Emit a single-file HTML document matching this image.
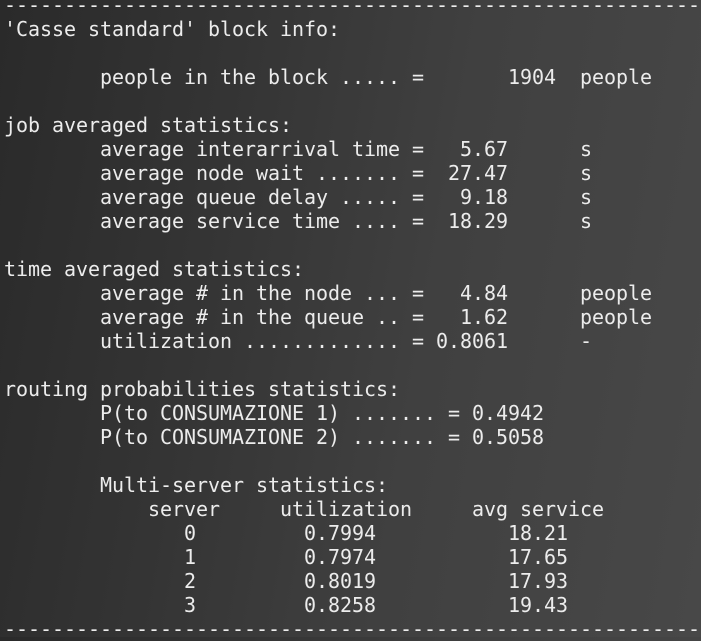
<!DOCTYPE html>
<html><head><meta charset="utf-8"><style>
html,body{margin:0;padding:0;width:701px;height:637px;overflow:hidden;}
body{background:linear-gradient(100deg,#2a2a2a 0%,#343434 30%,#404040 60%,#484848 100%);}
pre{position:absolute;left:4px;top:-7px;margin:0;font-family:"DejaVu Sans Mono","Liberation Mono",monospace;font-size:20px;line-height:24px;color:#ececec;letter-spacing:-0.04px;}
</style></head><body><pre>-----------------------------------------------------------
'Casse standard' block info:

        people in the block ..... =       1904  people

job averaged statistics:
        average interarrival time =   5.67      s
        average node wait ....... =  27.47      s
        average queue delay ..... =   9.18      s
        average service time .... =  18.29      s

time averaged statistics:
        average # in the node ... =   4.84      people
        average # in the queue .. =   1.62      people
        utilization ............. = 0.8061      -

routing probabilities statistics:
        P(to CONSUMAZIONE 1) ....... = 0.4942
        P(to CONSUMAZIONE 2) ....... = 0.5058

        Multi-server statistics:
            server     utilization     avg service
               0         0.7994           18.21
               1         0.7974           17.65
               2         0.8019           17.93
               3         0.8258           19.43
-----------------------------------------------------------</pre></body></html>
